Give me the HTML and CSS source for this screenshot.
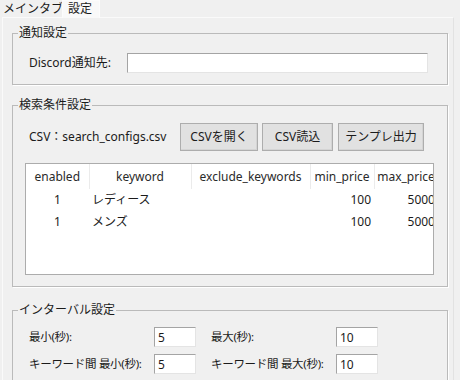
FILE: index.html
```html
<!DOCTYPE html>
<html lang="ja">
<head>
  <meta charset="UTF-8" />
  <title>設定</title>
  <link rel="stylesheet" href="styles.css">
</head>
<body>
  <div class="tabs">
    <div class="tab">メインタブ</div>
    <div class="tab active">設定</div>
  </div>

  <div class="panel">
    <fieldset class="group">
      <legend>通知設定</legend>
      <div class="row">
        <label class="field-label discord-label">Discord通知先:</label>
        <input class="text-input discord-input" type="text">
      </div>
    </fieldset>

    <fieldset class="group group-search">
      <legend>検索条件設定</legend>
      <div class="row">
        <span class="field-label csv-label">CSV：search_configs.csv</span>
        <div class="buttons">
          <button class="btn btn-open" type="button">CSVを開く</button>
          <button class="btn btn-load" type="button">CSV読込</button>
          <button class="btn btn-template" type="button">テンプレ出力</button>
        </div>
      </div>
      <div class="table-box">
        <table class="config-table">
          <colgroup>
            <col class="c-enabled">
            <col class="c-keyword">
            <col class="c-exclude">
            <col class="c-price">
            <col class="c-price">
          </colgroup>
          <thead>
            <tr>
              <th>enabled</th>
              <th>keyword</th>
              <th>exclude_keywords</th>
              <th>min_price</th>
              <th>max_price</th>
            </tr>
          </thead>
          <tbody>
            <tr>
              <td class="center">1</td>
              <td>レディース</td>
              <td></td>
              <td class="num">100</td>
              <td class="num">5000</td>
            </tr>
            <tr>
              <td class="center">1</td>
              <td>メンズ</td>
              <td></td>
              <td class="num">100</td>
              <td class="num">5000</td>
            </tr>
          </tbody>
        </table>
      </div>
    </fieldset>

    <fieldset class="group group-interval">
      <legend>インターバル設定</legend>
      <div class="interval-row">
        <label class="field-label interval-label">最小(秒):</label>
        <input class="text-input small" type="text" value="5">
        <label class="field-label interval-label second">最大(秒):</label>
        <input class="text-input small" type="text" value="10">
      </div>
      <div class="interval-row">
        <label class="field-label interval-label">キーワード間 最小(秒):</label>
        <input class="text-input small" type="text" value="5">
        <label class="field-label interval-label second">キーワード間 最大(秒):</label>
        <input class="text-input small" type="text" value="10">
      </div>
    </fieldset>
  </div>
</body>
</html>
```

FILE: styles.css
```css
* {
  box-sizing: border-box;
}

html, body {
  margin: 0;
  width: 460px;
  height: 380px;
  overflow: hidden;
}

body {
  font-family: "Noto Sans", "Noto Sans CJK JP", sans-serif;
  font-size: 12px;
  line-height: 16px;
  color: #1b1b1b;
  background-color: #f0f0f0;
}

/* タブ */
.tabs {
  display: flex;
  height: 17px;
}

.tab {
  padding: 0 3px;
  width: 62px;
  line-height: 17px;
  white-space: nowrap;
}

.tab.active {
  width: 38px;
  padding-left: 5px;
  height: 18px;
  background-color: #f9f9f9;
  border: 1px solid #fcfcfc;
  border-bottom: none;
  line-height: 16px;
  position: relative;
  z-index: 1;
}

.panel {
  margin-left: 2px;
  width: 452px;
  height: 363px;
  border: 1px solid #fafafa;
  border-right-color: #e2e2e2;
  border-bottom: none;
  padding: 0 4px 0 9px;
  overflow: hidden;
}

/* グループ枠 */
.group {
  margin: 7px 0 0 0;
  min-width: 0;
  width: 436px;
  padding: 12px 16px 11px 16px;
  border: 1px solid #bababa;
  box-shadow: 1px 1px 0 #ffffff;
}

.group legend {
  margin-left: -11px;
  padding: 0 1px;
  line-height: 16px;
}

.group-search {
  margin-top: 12px;
  padding-top: 10px;
}

.group-interval {
  margin-top: 15px;
  padding-top: 9px;
}

.row {
  display: flex;
  align-items: center;
}

.field-label {
  white-space: nowrap;
  flex-shrink: 0;
}

.discord-label {
  width: 98px;
}

.text-input {
  flex-shrink: 0;
  height: 20px;
  margin: 0;
  padding: 0 3px;
  font: inherit;
  color: #1b1b1b;
  background-color: white;
  border: 1px solid;
  border-color: #a4a4a4 #e4e4e4 #e4e4e4 #a4a4a4;
  outline: none;
}

.discord-input {
  width: 301px;
}

/* ボタン */
.csv-label {
  width: 151px;
}

.buttons {
  display: flex;
  gap: 4px;
}

.btn {
  height: 28px;
  margin: 0;
  padding: 0;
  font: inherit;
  color: #1b1b1b;
  background-color: #e1e1e1;
  border: 1px solid #adadad;
  box-shadow: inset -1px -1px 0 #d4d4d4;
}

.btn-open {
  width: 78px;
}

.btn-load {
  width: 71px;
}

.btn-template {
  width: 86px;
  margin-left: 1px;
}

/* テーブル */
.table-box {
  margin: 12px 0 0 -4px;
  width: 409px;
  height: 112px;
  background-color: white;
  border: 1px solid #acacac;
  overflow: hidden;
}

.config-table {
  width: 412px;
  table-layout: fixed;
  border-collapse: collapse;
}

.c-enabled { width: 63px; }
.c-keyword { width: 102px; }
.c-exclude { width: 119px; }
.c-price { width: 64px; }

.config-table th {
  height: 25px;
  padding: 0;
  font-weight: normal;
  color: #2a2a2a;
  text-align: center;
  white-space: nowrap;
  overflow: hidden;
  border-right: 1px solid #ebebeb;
}

.config-table td {
  height: 22px;
  padding: 0 3px;
  white-space: nowrap;
  overflow: hidden;
}

.config-table td.center {
  text-align: center;
}

.config-table td.num {
  text-align: right;
}

/* インターバル */
.interval-row {
  display: flex;
  align-items: center;
}

.interval-row + .interval-row {
  margin-top: 7px;
}

.interval-label {
  width: 125px;
  font-size: 11.5px;
  letter-spacing: -0.3px;
}

.interval-label.second {
  margin-left: 15px;
}

.text-input.small {
  width: 42px;
}
```
